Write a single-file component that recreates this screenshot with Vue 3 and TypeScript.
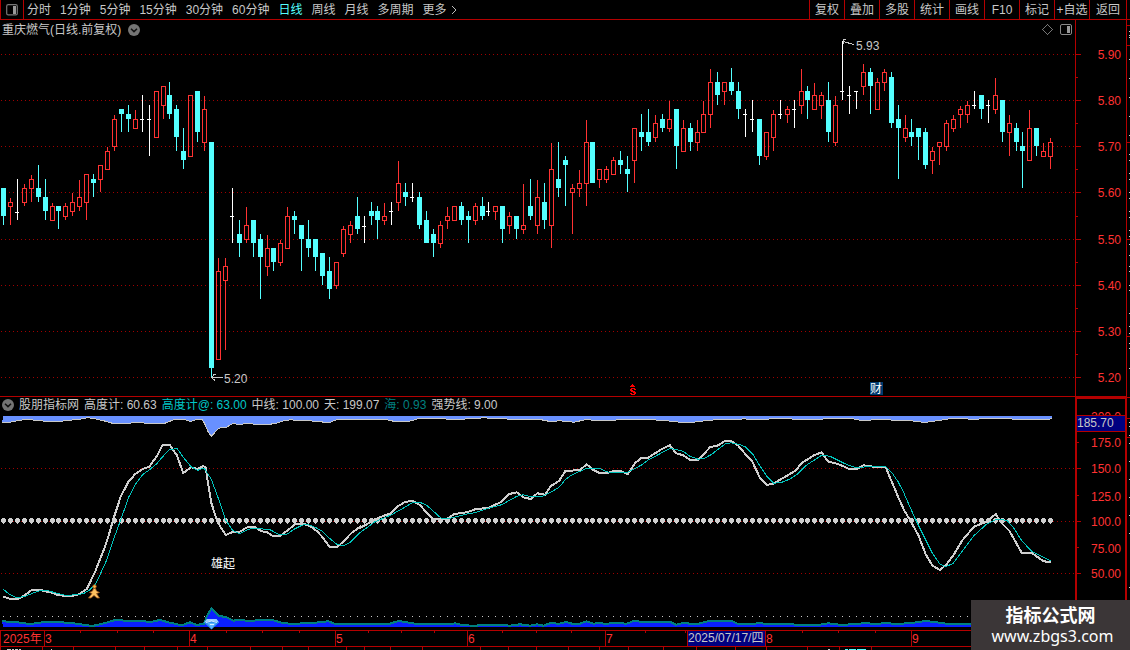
<script setup lang="ts">
type Kind = 'c' | 'r' | 'w'
interface Candle { kind: Kind; x: number; high: number; top: number; bottom: number; low: number }
type Point = [number, number]

const periods = ['分时', '1分钟', '5分钟', '15分钟', '30分钟', '60分钟', '日线', '周线', '月线', '多周期']
const activePeriod = '日线'
const tools = ['复权', '叠加', '多股', '统计', '画线', 'F10', '标记', '+自选', '返回']

const legend = [
  { text: '高度计: 60.63', tone: 'plain' },
  { text: '高度计@: 63.00', tone: 'cyan' },
  { text: '中线: 100.00', tone: 'plain' },
  { text: '天: 199.07', tone: 'plain' },
  { text: '海: 0.93', tone: 'teal' },
  { text: '强势线: 9.00', tone: 'plain' },
]

// Each entry: kind, high, body top, body bottom, low, in thirds of a unit below the block's base.
const blocks: { base: number; rows: string }[] = [
  {
    base: 70,
    rows: `c 354 354 437 465|r 384 396 411 465|w 327 425 425 450|r 342 354 399 408|r 315 327 357 396|c 285 354 381 396
|c 327 381 423 450|r 399 408 453 453|c 408 408 423 477|r 399 408 441 450|r 369 396 426 438|r 330 381 411 423
|r 312 312 399 450|c 312 327 339 381|r 285 285 330 366|r 231 243 300 300|r 135 147 231 243|c 117 117 132 186
|c 105 132 147 186|r 120 147 177 177|w 75 148 148 186|w 105 148 148 258|r 63 63 204 204|r 48 48 108 147
|c 36 75 132 147|c 105 117 201 243|c 174 243 270 297|r 75 75 261 261|c 63 63 186 216|r 78 117 219 243
|c 216 216 894 925|r 564 603 870 870|r 564 588 633 840|w 354 439 439 519`,
  },
  {
    base: 140,
    rows: `c 240 282 309 351|r 201 255 300 309|c 240 240 309 351|c 282 297 351 477|r 285 324 381 408|c 324 324 366 393
|r 300 309 369 378|r 201 228 327 327|c 213 228 240 282|c 255 255 297 393|c 240 297 324 351|c 297 297 351 393
|c 339 339 408 435|c 351 393 447 477|r 366 366 438 447|r 258 267 342 351|r 243 255 285 309|c 171 228 267 282
|w 228 257 257 309|c 186 213 228 255|c 198 213 240 297|r 189 228 243 255|w 186 214 214 255|r 63 129 189 213
|c 129 156 171 198|w 129 172 172 186|c 156 171 255 267|c 213 240 309 309`,
  },
  {
    base: 100,
    rows: `c 387 402 429 471|r 363 375 432 444|r 321 348 363 387|r 318 318 363 363|c 306 318 360 375|c 333 348 360 429
|r 309 318 363 375|c 291 318 348 360|w 306 334 334 348|r 318 318 336 360|c 318 318 387 429|r 336 348 378 402
|c 348 348 387 417|r 252 375 390 402|c 237 318 348 360|r 240 291 378 402|c 249 306 360 387|r 129 207 378 444
|c 126 237 264 291|c 168 180 195 318|r 252 264 279 402|r 210 249 267 291|r 60 126 252 318|c 126 126 249 249
|r 207 207 240 264|r 198 207 240 249|r 171 180 225 225|c 153 180 195 222|c 168 207 222 276|r 84 84 183 249
|c 42 96 111 153`,
  },
  {
    base: 30,
    rows: `c 237 306 336 348|r 255 279 324 336|c 252 267 294 306|r 213 267 297 306|c 237 237 348 417|r 270 294 366 366
|c 279 294 336 363|r 270 306 339 363|r 213 252 309 309|r 117 156 255 294|c 126 156 195 225|r 156 156 186 225
|c 114 156 183 195|c 156 183 237 267|w 237 253 253 321|w 210 268 268 306|c 267 267 378 405|r 306 306 381 390
|r 240 252 324 363|w 210 253 253 267|r 228 237 255 279|w 210 238 238 294|r 117 183 228 252|c 168 183 210 267
|r 159 195 240 240|r 186 195 228 267|c 156 210 306 336|r 198 225 339 348|w 33 184 184 210|w 168 196 196 252
|w 184 184 184 237|r 102 126 171 195|c 114 126 168 252|r 144 156 240 240|r 117 126 159 183|c 126 141 279 294
|c 225 267 294 447|r 255 294 324 336|c 267 306 321 348|c 294 294 321 390|c 294 306 405 417|r 351 363 393 432
|r 336 336 351 405|r 270 279 351 363|r 255 267 297 306|r 228 237 255 294|r 213 225 255 279|w 183 226 226 237
|c 195 195 237 267|w 210 226 226 279|r 144 195 240 252|c 210 210 306 336|r 255 279 309 378|c 279 294 336 363
|c 306 348 363 474|r 240 294 393 393|c 294 294 348 378|r 339 363 381 381|r 324 336 381 417`,
  },
]

const barX = (i: number): number => Math.floor(3.5 + i * 6.935)

const candles: Candle[] = blocks
  .flatMap(({ base, rows }) =>
    rows.split('|').map((row) => {
      const [kind, ...values] = row.trim().split(' ')
      const [high, top, bottom, low] = values.map((v) => base + Math.floor(Number(v) / 3 + 0.34))
      return { kind: kind as Kind, high, top, bottom, low }
    }),
  )
  .map((c, i) => ({ ...c, x: barX(i) }))

const trace = (x0: number, y0: number, data: string): Point[] =>
  data.split(' ').map((pair) => {
    const [x, y] = pair.split(',').map(Number)
    return [x0 + x / 3, y0 + y / 3]
  })
const join = (points: Point[]): string => points.map(([x, y]) => `${x.toFixed(1)},${y.toFixed(1)}`).join(' ')

const heightLine = join([
  ...trace(0, 430, '10,500 30,506 55,507 75,495 97,479 120,479 135,484 155,488 175,496 215,498 237,493 261,476 285,426 312,358 323,326 340,268 362,200 385,156 405,133 428,117 448,110 470,79 488,45 509,45 530,75 550,129 573,112 593,117 610,108 617,112 622,145 634,218 652,275 677,315 700,305 718,306 745,290 765,292 785,304 800,306 818,318 840,318 862,302 885,283 910,281 930,288 950,303 968,322 988,350 1012,350 1030,335 1055,308 1080,291'),
  ...trace(360, 430, '0,293 15,286 45,268 75,256 93,250 115,228 135,216 157,212 180,225 200,248 220,267 260,268 283,252 320,247 348,237 385,234 425,215 448,192 470,187 490,202 512,207 532,190 555,194 573,168 598,152 616,123 660,120 680,103 700,120 718,129 745,128 765,122 780,122 803,132 825,100 843,84 865,83 905,57 930,46 948,70 970,76 990,90 1015,90 1050,52 1075,46 1095,33 1113,33 1135,47'),
  ...trace(740, 395, '0,159 37,200 59,247 80,270 100,266 165,228 187,203 222,181 245,172 263,199 300,209 325,221 350,222 370,211 400,215 437,217 475,307 492,345 510,375 535,420 557,478 577,511 599,525 617,511 640,481 667,436 702,395 740,380 767,357 785,385 808,407 845,473 875,473 910,499 932,501'),
])

const smoothLine = join([
  ...trace(0, 430, '10,478 30,494 50,503 75,499 100,489 120,482 145,482 170,490 200,497 250,491 270,479 287,462 302,430 320,390 340,330 365,262 385,204 405,165 428,134 450,118 470,101 490,78 510,58 532,56 550,82 573,110 593,121 612,114 634,148 655,205 677,270 697,300 718,311 745,298 765,295 810,299 838,314 862,312 885,296 910,284 925,284 945,292 965,302 990,326 1010,343 1030,347 1050,338 1075,312'),
  ...trace(360, 430, '0,308 45,275 93,255 120,240 160,217 180,217 200,226 245,266 265,266 320,252 345,248 385,235 425,224 470,199 490,194 510,200 550,198 575,185 598,171 616,149 635,135 680,115 718,115 745,127 800,128 843,106 865,90 930,55 970,64 990,79 1015,88 1035,84 1055,73 1095,42 1113,38 1135,43'),
  ...trace(740, 395, '0,149 15,155 40,180 60,213 80,243 102,265 125,262 150,252 170,239 200,210 245,181 270,184 325,211 345,217 435,214 457,235 475,261 492,295 527,375 550,420 577,474 599,506 617,515 640,505 700,424 740,387 770,373 800,376 820,397 845,437 875,469 910,486 932,497'),
])

const skyLine = join([
  ...trace(0, 395, '7,82 30,80 50,76 70,73 95,73 115,76 160,78 185,77 210,74 240,71 262,67 280,68 295,72 320,78 340,84 385,84 395,82 430,82 440,85 490,85 500,81 520,73 530,71 550,71 572,78 590,72 608,73 615,85 625,108 634,122 655,98 680,95 697,84 720,87 740,84 775,87 805,87 830,83 850,76 870,73 900,75 950,77 985,82 1010,73 1070,71 1100,73 1160,73 1185,78 1215,78 1235,76 1255,69 1330,70 1370,73 1410,69 1455,67 1480,70 1560,71 1620,72 1650,78 1680,76 1722,80 1755,73 1820,75 1875,72 1950,72 2000,76 2040,80 2080,80 2130,74 2180,71'),
  ...trace(740, 395, '0,71 15,70 30,72 80,71 115,68 150,70 185,73 240,71 290,68 340,70 370,76 400,73 500,74 555,81 590,76 640,68 660,68 690,71 745,70 800,69 840,73 880,71 910,73 935,70'),
])

const seaLine = join([
  ...trace(0, 431, '6,571 45,573 90,579 135,573 175,573 220,577 250,581 277,585 300,580 320,575 345,567 390,570 455,572 480,567 505,574 545,583 570,574 590,582 612,578 622,553 634,533 655,554 680,559 700,569 718,566 745,570 775,568 820,568 845,575 870,578 930,577 985,571 1003,578 1075,578'),
  ...trace(360, 431, '0,578 90,578 115,570 155,576 175,580 265,580 285,577 310,583 345,584 385,581 430,582 450,584 480,580 510,584 532,580 550,584 575,575 595,579 617,573 640,579 660,578 680,571 700,578 720,576 740,579 760,575 800,578 823,569 850,574 885,572 930,572 948,581 970,576 1010,580 1050,569 1090,570 1115,570 1135,579'),
  ...trace(740, 396, '0,685 40,685 58,680 80,685 240,686 265,682 300,686 350,685 370,681 410,684 435,681 470,684 515,681 557,675 600,680 620,683 935,683'),
])

const priceTicks = [54, 100, 146, 192, 239, 285, 331, 377].map((y, i) => ({ y, label: (5.9 - i / 10).toFixed(2) }))
const priceMinor = [77, 123, 169, 216, 262, 308, 354]
const levels = [
  { y: 447, label: '175.0' },
  { y: 473, label: '150.0' },
  { y: 501, label: '125.0' },
  { y: 526, label: '100.0' },
  { y: 553, label: '75.00' },
  { y: 578, label: '50.00' },
]
const levelMajor = [468, 521, 573]
const levelMinor = [442, 495, 547]

const months = [
  { x: 44, label: '3' },
  { x: 189, label: '4' },
  { x: 335, label: '5' },
  { x: 467, label: '6' },
  { x: 605, label: '7' },
  { x: 765, label: '8' },
  { x: 911, label: '9' },
]
const weekTicks = [80, 117, 153, 226, 262, 299, 368, 401, 434, 502, 536, 571, 645, 685, 802, 838, 875]
const footTicks = [0, 42, 73, 115, 144, 177, 207, 250, 282, 308, 346, 364, 390, 422, 480, 508, 536, 568, 599, 628, 663, 696, 735, 766, 807, 839, 871]
const edgeTicks = [25, 45, 142, 239, 336]
const edgeDots = [31, 35, 37, 59, 78, 97, 116, 135, 154, 160, 173, 179, 192, 198, 211, 217, 230, 236, 244, 255, 266, 271, 285, 290, 313, 326, 333, 343, 348, 368]
const lowerDots = [422, 426, 435, 443, 461, 479, 497, 515, 533, 587]
</script>

<template>
  <main class="terminal">
    <nav class="toolbar">
      <button class="cell layout" aria-label="布局">
        <svg width="12" height="12" viewBox="0 0 12 12"><rect x=".7" y=".7" width="10.6" height="10.2" rx="1.5" fill="none" stroke="#777" stroke-width="1.2" /><rect x="7" y="2" width="3" height="8" fill="#999" /></svg>
      </button>
      <div class="periods">
        <button v-for="p in periods" :key="p" :class="{ active: p === activePeriod }">{{ p }}</button>
        <button class="more">更多<svg width="6" height="10" viewBox="0 0 6 10"><path d="M1 1 5 5 1 9" fill="none" stroke="#bbb" /></svg></button>
      </div>
      <div class="tools">
        <button v-for="t in tools" :key="t" class="cell">{{ t }}</button>
      </div>
    </nav>

    <section class="panel">
      <header class="caption title">
        <h1>重庆燃气(日线.前复权)</h1>
        <svg class="drop" viewBox="0 0 12 12"><circle cx="6" cy="6" r="6" fill="#747474" /><path d="M3 4.8 6 7.6 9 4.8" fill="none" stroke="#111" stroke-width="1.5" /></svg>
      </header>
      <svg class="plot" viewBox="0 20 1130 377">
        <g class="grid">
          <path v-for="t in priceTicks" :key="t.y" :d="`M1 ${t.y}.5H1075`" />
        </g>
        <g v-for="c in candles" :key="c.x" :class="c.kind">
          <template v-if="c.kind === 'r'">
            <path :d="`M${c.x}.5 ${c.high}V${c.top}M${c.x}.5 ${c.bottom}V${c.low}`" />
            <rect :x="c.x - 1.5" :y="c.top + 0.5" width="4" :height="c.bottom - c.top - 1" />
          </template>
          <template v-else-if="c.kind === 'c'">
            <rect :x="c.x" :y="c.high" width="1" :height="c.low - c.high" />
            <rect :x="c.x - 2" :y="c.top" width="5" :height="c.bottom - c.top" />
          </template>
          <template v-else>
            <rect :x="c.x" :y="c.high" width="1" :height="c.low - c.high" />
            <rect :x="c.x - 2" :y="c.top" width="4" height="1" />
          </template>
        </g>
        <path class="pointer" d="M223 377.5H212M216 374.5H214L211.500 377.5 215 380.500M846 39.500H843V44M843 41.500 847 42.500 850 43.500 854 44.500" />
        <text class="note" x="224" y="383">5.20</text>
        <text class="note" x="856" y="50">5.93</text>
        <path d="M632 384h1v1h1v1h1v1h-5v-1h1v-1h1zM631 388h4v1h1v1h-2v-1h-2v1h1v1h2v1h1v2h-1v1h-4v-1h-1v-1h2v1h2v-1h-1v-1h-2v-1h-1v-2h1z" fill="#f00" />
        <rect x="870" y="382" width="13" height="13" fill="#003a70" />
        <text class="badge" x="870" y="393">财</text>
        <path d="M1042.500 29.500 1047.500 24.500 1052.500 29.500 1047.500 34.500Z" fill="none" stroke="#777" />
        <g shape-rendering="auto">
          <rect x="1060.500" y="24.500" width="11" height="10" rx="1.500" fill="none" stroke="#888" />
          <rect x="1067" y="26" width="3" height="7" fill="#999" />
        </g>
        <g class="rule">
          <path d="M1075.500 20V397M1126.500 20V397M0 396.500H1127" />
          <path v-for="t in priceTicks" :key="t.y" :d="`M1076 ${t.y}.5h5`" />
          <path v-for="y in priceMinor" :key="y" :d="`M1076 ${y}.5h2`" />
          <path v-for="y in edgeTicks" :key="y" :d="`M1127 ${y}.5h3`" />
        </g>
        <rect v-for="y in edgeDots" :key="y" x="1129" :y="y" width="1" height="1" fill="#ccc" />
        <text v-for="t in priceTicks" :key="t.label" class="scale" x="1121" :y="t.y + 5">{{ t.label }}</text>
      </svg>
    </section>

    <section class="panel">
      <header class="caption legend">
        <svg class="drop" viewBox="0 0 12 12"><circle cx="6" cy="6" r="6" fill="#747474" /><path d="M3 4.800 6 7.600 9 4.800" fill="none" stroke="#111" stroke-width="1.500" /></svg>
        <span class="plain">股朋指标网</span>
        <span v-for="l in legend" :key="l.text" :class="l.tone">{{ l.text }}</span>
      </header>
      <svg class="plot" viewBox="0 397 1130 233">
        <g class="grid">
          <path v-for="y in levelMajor" :key="y" :d="`M1 ${y}.5H1075`" />
        </g>
        <polyline :points="skyLine" fill="none" stroke="#c8c8c8" stroke-width="2" />
        <polygon :points="`3,416 ${skyLine} 1052,416`" fill="#6890ff" />
        <rect v-for="c in candles" :key="c.x" :x="c.x" y="616" width="1" height="1" fill="#c8c8c8" />
        <polygon :points="`3,627 ${seaLine} 1052,627`" fill="#0a20ff" />
        <polyline :points="seaLine" fill="none" stroke="#008080" stroke-width="2" />
        <g fill="#cfcfcf">
          <path v-for="c in candles" :key="c.x" :d="`M${c.x - 1} 518h3v1h1v3h-1v1h-1v1h-1v-1h-1v-1h-1v-3h1z`" />
        </g>
        <polyline :points="heightLine" fill="none" stroke="#cfcfcf" stroke-width="2" />
        <polyline :points="smoothLine" fill="none" stroke="#00c4bc" stroke-width="1" />
        <text class="mark" x="211" y="568">雄起</text>
        <g shape-rendering="auto">
          <circle cx="94.500" cy="586.500" r="1.800" fill="#ffb54a" stroke="#8c4a10" stroke-width=".8" />
          <path d="M93.500 588.500h2L96.500 591 99.500 592.500 96.500 593.500 99.500 598H97L94 595.500 91 598H88.500L92 593.500 89.500 592.500 92.500 591Z" fill="#ffc060" stroke="#a0561a" stroke-width=".8" />
          <path d="M204 622.500 207 619H216.500L219 622.500 211.500 629.500Z" fill="#2f8ff0" />
          <path d="M204 622.500 207 619H216.500L219 622.500 214 621H209Z" fill="#9cd0ff" />
          <path d="M207.500 623H216L211.500 629Z" fill="#58b4ff" />
          <path d="M206 622.500Q211.500 619.500 217 622.500M210 624.500h4" fill="none" stroke="#fff" stroke-width=".8" />
        </g>
        <text class="scale" x="1121" y="421">200.0</text>
        <rect x="1077" y="415" width="48" height="17" fill="#000080" />
        <g class="rule">
          <path d="M1077 415.500h49M1077 431.500h49" />
          <path d="M1076 630V398H1126V630" stroke-width="2" />
          <path v-for="y in levelMajor" :key="y" :d="`M1077 ${y}.5h4`" />
          <path v-for="y in levelMinor" :key="y" :d="`M1077 ${y}.5h2`" />
          <path d="M1127 397.500h3M1127 418.500h3M1127 437.500h3" />
        </g>
        <rect v-for="y in lowerDots" :key="y" x="1129" :y="y" width="1" height="1" fill="#ccc" />
        <text class="note" x="1077" y="427">185.70</text>
        <text v-for="l in levels" :key="l.label" class="scale" x="1121" :y="l.y">{{ l.label }}</text>
      </svg>
    </section>

    <section class="panel">
      <svg class="plot" viewBox="0 630 1130 20">
        <rect x="687" y="631" width="79" height="15" fill="#000080" />
        <g class="rule">
          <path d="M0 630.500H1130M0 646.500H1130M.5 630V646M687.500 630V646" />
          <path v-for="m in months" :key="m.x" :d="`M${m.x}.5 631V646`" />
          <path v-for="x in weekTicks" :key="x" :d="`M${x}.5 631v2`" />
          <path v-for="x in footTicks" :key="x" :d="`M${x}.5 647v3`" />
        </g>
        <text class="month" x="3" y="643">2025年</text>
        <text v-for="m in months" :key="m.x" class="month" :x="m.x + 1" y="643">{{ m.label }}</text>
        <text class="note" x="688" y="642">2025/07/17/四</text>
        <path d="M7 649.500h4M12 649.500h2M15 649.500h3M19 649.500h2M51 649.500h1M828 649.500h2" fill="none" stroke="#ccc" />
        <path d="M845 649.500h3M849 649.500h7M857 649.500h9" fill="none" stroke="#54ffff" />
      </svg>
    </section>

    <aside class="brand">
      <strong>指标公式网</strong>
      <a href="#">www.zbgs3.com</a>
    </aside>
  </main>
</template>

<style>
body {
  background: #000;
}
</style>

<style scoped>
.terminal {
  position: relative;
  display: flex;
  flex-direction: column;
  overflow: hidden;
  background: #000;
  color: #c8c8c8;
  font: 12px/18px "Liberation Sans", "Noto Sans CJK SC", sans-serif;
}
.toolbar {
  display: flex;
  box-sizing: border-box;
  height: 20px;
  padding-right: 3px;
  border-bottom: 1px solid #b40000;
}
button {
  padding: 0;
  border: 0;
  background: none;
  color: inherit;
  font: inherit;
  white-space: nowrap;
}
.layout {
  display: flex;
  align-items: center;
  justify-content: center;
  width: 24px;
  border-left: 1px solid #b40000;
  border-right: 1px solid #b40000;
}
.periods {
  display: flex;
  flex: 1;
  gap: 9px;
  padding-left: 3px;
}
.active {
  color: #54ffff;
}
.more {
  display: flex;
  align-items: center;
  gap: 4px;
}
.tools {
  display: flex;
}
.tools .cell {
  box-sizing: border-box;
  width: 35px;
  border-left: 1px solid #b40000;
}
.tools .cell:last-child {
  width: 38px;
  border-right: 1px solid #b40000;
}
.panel {
  position: relative;
}
.plot {
  display: block;
  width: 100%;
  height: auto;
  shape-rendering: crispEdges;
}
.caption {
  position: absolute;
  top: 0;
  left: 2px;
  display: flex;
  align-items: center;
  gap: 5px;
  white-space: nowrap;
}
.title {
  top: 1px;
  gap: 7px;
}
.legend {
  top: -1px;
}
h1 {
  margin: 0;
  font: inherit;
}
.drop {
  width: 12px;
  height: 12px;
}
.plain {
  color: #c8c8c8;
}
.cyan {
  color: #00c8c8;
}
.teal {
  color: #008080;
}
.grid path {
  fill: none;
  stroke: #a00000;
  stroke-dasharray: 1 3;
}
.rule path {
  fill: none;
  stroke: #b40000;
}
.r path,
.r rect {
  fill: none;
  stroke: #ff3232;
}
.c {
  fill: #54ffff;
}
.w {
  fill: #fff;
}
.pointer {
  fill: none;
  stroke: #c8c8c8;
}
.note {
  fill: #c8c8c8;
}
.badge,
.mark {
  fill: #fff;
}
.scale {
  fill: #ff3232;
  text-anchor: end;
}
.month {
  fill: #ff3232;
}
.brand {
  position: absolute;
  right: 0;
  bottom: 0;
  display: flex;
  flex-direction: column;
  align-items: center;
  box-sizing: border-box;
  width: 159px;
  height: 50px;
  padding-top: 4px;
  background: #3b3637;
  color: #fff;
}
.brand strong {
  font: bold 18px/20px "Noto Sans CJK SC", sans-serif;
}
.brand a {
  padding-left: 4px;
  color: inherit;
  font: 16px/24px "Noto Sans", sans-serif;
  text-decoration: none;
}
</style>
